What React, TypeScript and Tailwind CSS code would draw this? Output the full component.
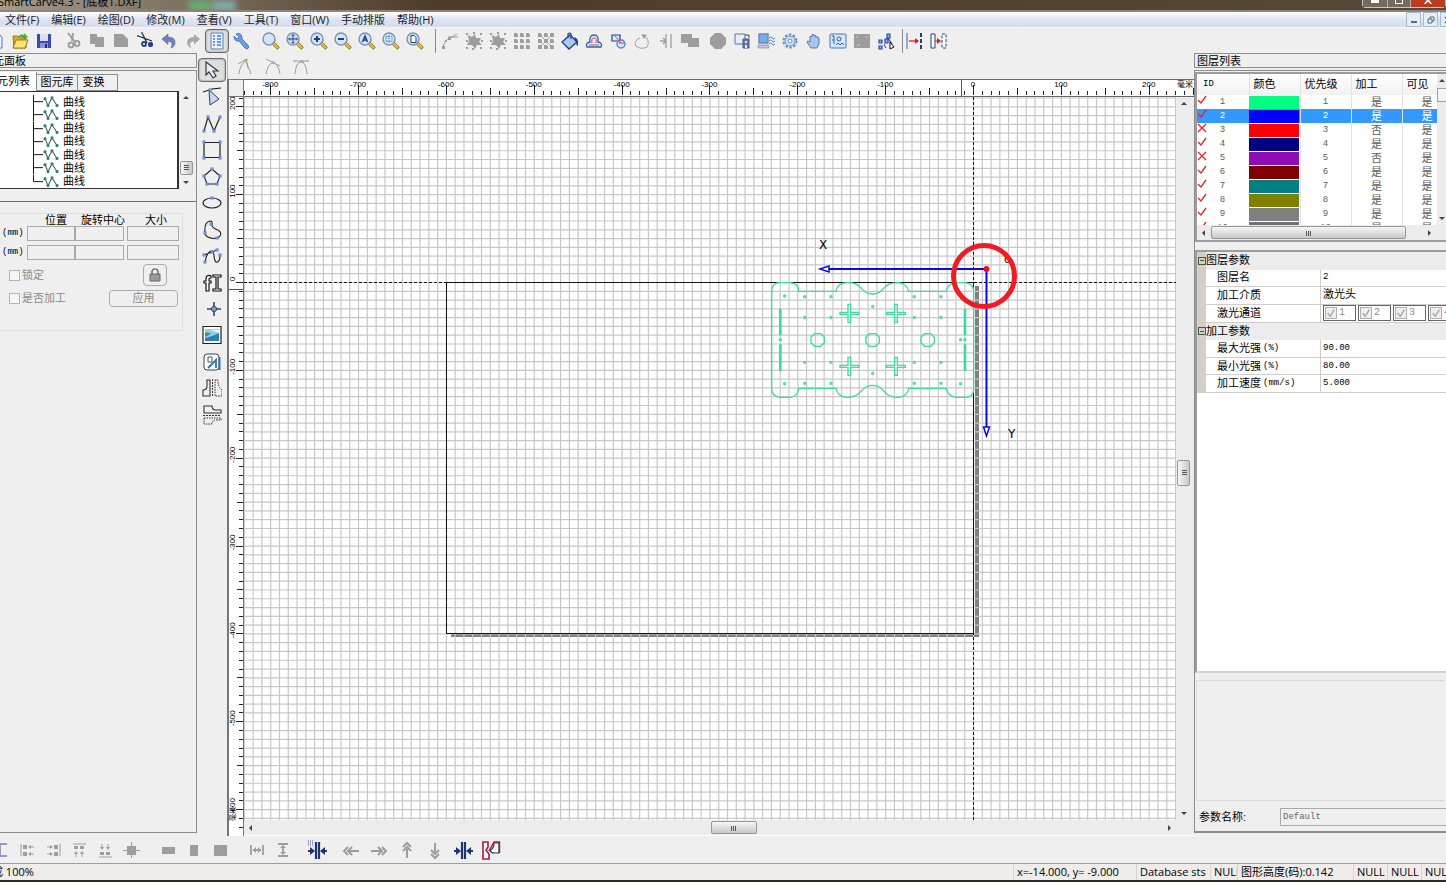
import type { ReactNode } from "react";
import { clsx } from "clsx";

const NAVY = "#1f3f86";
const BLUE = "#4a7fd0";
const GREY = "#9d9d9d";

const UNIT = 0.8785;
const ORIGIN_X = 729;
const ORIGIN_Y = 185;

const MENUS = [
  "文件(F)",
  "编辑(E)",
  "绘图(D)",
  "修改(M)",
  "查看(V)",
  "工具(T)",
  "窗口(W)",
  "手动排版",
  "帮助(H)",
];

type Tool = { label: string; icon: ReactNode; active?: boolean };

function magnifier(inner: ReactNode) {
  return (
    <>
      <path d="M12.500 12.500 17.500 17.500" stroke="#8a6914" strokeWidth="3.600" />
      <path d="M12.500 12.500 17 17" stroke="#edc04c" strokeWidth="2.200" />
      <circle cx="8" cy="8" r="6" fill="#d3e5f7" stroke="#7d93b5" strokeWidth="1.400" />
      {inner}
    </>
  );
}

function cells(color: string, crossed: boolean) {
  return (
    <>
      {[2, 8, 14].map((y) =>
        [2, 8, 14].map((x) => (
          <path key={`${x}-${y}`} d={`M${x} ${y}h3l1 2v2h-4z`} fill={color} />
        )),
      )}
      {crossed && <path d="M2 2 18 18M18 2 2 18" stroke={color} />}
    </>
  );
}

const blob = (
  <>
    <path
      d="M4 4l4 2 3-3 1 4 5 0-2 4 3 3-5 0-2 4-3-4-5 0 2-4z"
      fill={GREY}
    />
    <path
      d="M2 2h2v2H2zM9 1h2v2H9zM16 2h2v2h-2zM2 9h2v2H2zM17 9h2v2h-2zM2 16h2v2H2zM8 17h2v2H8zM16 16h2v2h-2z"
      fill={GREY}
    />
  </>
);

const FILE_TOOLS: Tool[] = [
  {
    label: "New",
    icon: <path d="M6 3h7l3 3v11H6z" fill="#e8f2fd" stroke={BLUE} />,
  },
  {
    label: "Open",
    icon: (
      <>
        <path d="M3 5h5l2 2h6v10H4z" fill="#d9a92c" stroke="#a37a14" />
        <path d="M3 17 6 9h12l-3 8z" fill="#ffe27a" stroke="#a37a14" />
        <path d="M8 6q3-4 6-2V2l4 4-4 3V7q-3-1-6-1z" fill="#4fae34" />
      </>
    ),
  },
  {
    label: "Save",
    icon: (
      <>
        <path d="M3 3h14v14H3z" fill="#3c48b4" />
        <path d="M6 3h8v7H6z" fill="#d9dff5" />
        <path d="M6 12h8v5H6z" fill="#8e96d8" />
        <path d="M11 13h2v4h-2z" fill="#232d86" />
      </>
    ),
  },
];

const EDIT_TOOLS: Tool[] = [
  {
    label: "Cut",
    icon: (
      <>
        <path d="M5 2 12 11M10 2 9 10" stroke={GREY} strokeWidth="2" />
        <circle cx="8" cy="14" r="2.4" stroke={GREY} strokeWidth="2" fill="none" />
        <circle cx="14" cy="12.5" r="2.4" stroke={GREY} strokeWidth="2" fill="none" />
      </>
    ),
  },
  {
    label: "Copy",
    icon: <path d="M3 3h7v3h7v10H8v-3H3z" fill={GREY} />,
  },
  {
    label: "Paste",
    icon: <path d="M3 3h9l5 5v8H3z" fill={GREY} />,
  },
  {
    label: "Split",
    icon: (
      <>
        <path d="M3 5 17 10M7 2 12 12" stroke="#222" strokeWidth="1.2" />
        <path d="M2 4h2v2H2zM6 1h2v2H6z" fill={BLUE} />
        <circle cx="9" cy="13" r="2" stroke={NAVY} strokeWidth="1.8" fill="none" />
        <rect x="13" y="11" width="5" height="5" rx="2" fill={NAVY} />
      </>
    ),
  },
  {
    label: "Undo",
    icon: (
      <path
        d="M3 8 9 3v3q8 0 7 7-1 3-4 4 3-7-3-6.500v3z"
        fill="#6f82b8"
        stroke="#5a6ca3"
        strokeWidth=".6"
      />
    ),
  },
  {
    label: "Redo",
    icon: <path d="M17 8 11 3v3Q4 6 4 12q1 4 4 5-3-7 3-6.500v3z" fill="#a8a8a8" />,
  },
  {
    label: "Panels",
    active: true,
    icon: (
      <>
        <path d="M4 2h12v16H4z" fill="#e7f0fb" stroke="#5c80b4" />
        <path
          d="M6 5h2M10 5h4M6 8h2M10 8h4M6 11h2M10 11h4M6 14h2M10 14h4"
          stroke={BLUE}
          strokeWidth="1.6"
        />
      </>
    ),
  },
  {
    label: "Settings",
    icon: (
      <path
        d="M3 5 6 8 8 6 5 3q5-2 6 3v2l6 6q2 3-1 4-1 0-2-1L8 10Q3 11 3 5z"
        fill="#6e9ce0"
        stroke="#3c6cb8"
        strokeWidth=".8"
      />
    ),
  },
];

const ZOOM_TOOLS: Tool[] = [
  { label: "Zoom", icon: magnifier(null) },
  {
    label: "Pan zoom",
    icon: magnifier(
      <path
        d="M8 4v8M4 8h8M6.500 5 8 3.500 9.500 5M6.500 11 8 12.500 9.500 11M5 6.500 3.500 8 5 9.500M11 6.500 12.500 8 11 9.500"
        stroke={NAVY}
        fill="none"
      />,
    ),
  },
  {
    label: "Zoom in",
    icon: magnifier(<path d="M8 5v6M5 8h6" stroke={NAVY} strokeWidth="2" />),
  },
  {
    label: "Zoom out",
    icon: magnifier(<path d="M5 8h6" stroke={NAVY} strokeWidth="2" />),
  },
  {
    label: "Zoom all",
    icon: magnifier(
      <path d="M5.500 11 8 5 10.500 11M6.500 9h3" stroke={NAVY} strokeWidth="1.500" fill="none" />,
    ),
  },
  {
    label: "Zoom selection",
    icon: magnifier(
      <path
        d="M5 5.500h6v5H5zM8 4v8"
        stroke={BLUE}
        strokeDasharray="1.500 1"
        fill="none"
      />,
    ),
  },
  {
    label: "Zoom page",
    icon: magnifier(<path d="M6 4.500h3l2 2v5H6z" fill="#fff" stroke={NAVY} />),
  },
];

const SHAPE_TOOLS: Tool[] = [
  {
    label: "Edit nodes",
    icon: (
      <>
        <path d="M3 17Q4 9 10 7L17 3M8 6 18 6" stroke={GREY} fill="none" />
        <path d="M2 15h3v3H2zM8 6h3v3H8zM5 9h2v2H5z" fill={GREY} />
      </>
    ),
  },
  { label: "Group", icon: blob },
  { label: "Ungroup", icon: blob },
  { label: "Array", icon: cells(GREY, false) },
  { label: "Clear array", icon: cells(GREY, true) },
  {
    label: "Fill",
    icon: (
      <>
        <path d="M10 4 17 11 9 18 2 11z" fill="#a9c9ea" stroke={NAVY} strokeWidth="1.3" />
        <path d="M8 7V3q2-2 3 0v5" stroke={NAVY} strokeWidth="1.2" fill="none" />
        <path d="M14 6q5 1 4 9-2-1-2-4z" fill={NAVY} />
      </>
    ),
  },
  {
    label: "Offset",
    icon: (
      <>
        <path
          d="M3 16q-2-4 3-5Q5 4 10 4t4 7q5 1 3 5z"
          fill="#dae7f6"
          stroke="#3d5fa6"
          strokeWidth="1.3"
        />
        <path d="M5 14h10M8 12q-1-5 2-5t2 5" stroke="#d0525a" fill="none" />
      </>
    ),
  },
  {
    label: "Weld",
    icon: (
      <>
        <path d="M4 4h8v6H4z" fill="#dfeaf8" stroke={NAVY} strokeWidth="1.2" />
        <circle cx="13" cy="13" r="4" fill="#cfe2f8" stroke={BLUE} strokeWidth="1.3" />
        <path d="M7 5 13 12M11 12h5" stroke="#dc3a44" />
      </>
    ),
  },
  {
    label: "Close curve",
    icon: (
      <>
        <path d="M8 7Q1 10 4 15q5 4 11 1 3-5-1-10" stroke={GREY} fill="none" />
        <path d="M9 3l6 1-3 4z" fill={GREY} />
      </>
    ),
  },
  {
    label: "Align edge",
    icon: (
      <path
        d="M10 3v14M15 3v14M4 10h6M7 7l3 3-3 3"
        stroke={GREY}
        strokeWidth="1.300"
        fill="none"
      />
    ),
  },
];

const UNION_TOOLS: Tool[] = [
  { label: "Union", icon: <path d="M1 3h11v4h7v9H8v-4H1z" fill={GREY} /> },
];

const MACHINE_TOOLS: Tool[] = [
  {
    label: "Stop",
    icon: <path d="M7 2h6l5 5v6l-5 5H7l-5-5V7z" fill={GREY} />,
  },
  {
    label: "Download",
    icon: (
      <>
        <path d="M3 3h10v10H3z" fill="#e8edf5" stroke="#5673a5" />
        <path d="M11 8h6v9h-6z" fill="#6b78a8" stroke="#46568e" />
        <path d="M13 10h2v2h-2zM13 14h2v3h-2z" fill="#e4e9f4" />
        <path d="M13 4h4v3" stroke="#444" fill="none" />
      </>
    ),
  },
  {
    label: "Connect",
    icon: (
      <>
        <path d="M3 3h9v9H3z" fill="#6fb0ec" stroke="#6e86b2" strokeWidth="1.4" />
        <path d="M2 14h10l1 3H2z" fill="#c5c1dd" stroke="#8a86b0" strokeWidth=".7" />
        <path
          d="M13 7q2-2 3 0t3 0M13 10q2-2 3 0t3 0M13 13q2-2 3 0t3 0"
          stroke="#5a83b6"
          fill="none"
        />
      </>
    ),
  },
  {
    label: "Machine options",
    icon: (
      <>
        <circle cx="10" cy="10" r="6.500" stroke="#6790bd" strokeWidth="2" strokeDasharray="2.500 1.600" fill="none" />
        <circle cx="10" cy="10" r="5" fill="#cfe2f5" stroke="#6790bd" />
        <circle cx="10" cy="10" r="2" fill="#fff" stroke="#6790bd" />
      </>
    ),
  },
  {
    label: "Manual",
    icon: (
      <path
        d="M7 17 3 11q0-2 3 0V6q1-2 2 0V4q1-2 2 0v1q2-2 2 1 3-1 3 2v5l-2 4z"
        fill="#a9c4ea"
        stroke="#5878b4"
      />
    ),
  },
  {
    label: "Simulate",
    icon: (
      <>
        <rect x="2" y="3" width="16" height="14" rx="1" fill="#d5e8fa" stroke="#4a74b8" />
        <path d="M4 5h2v8M4 9h2M8 14l2-2 2 2 2-2 2 2" stroke="#335da5" fill="none" />
        <circle cx="11" cy="8" r="2" fill="none" stroke="#335da5" />
      </>
    ),
  },
  {
    label: "Preview",
    icon: (
      <>
        <path d="M2 3h16v14H2z" fill={GREY} />
        <path d="M4 6h2M5 14h3M14 6h2" stroke="#d0d0d0" />
      </>
    ),
  },
  {
    label: "Cut path",
    icon: (
      <>
        <path
          d="M11 3h3v4h-3zM9 8h3v4H9zM3 9h3v3H3zM3 15h3v3H3zM12 7l4 6"
          fill="#8fb7ea"
          stroke="#234c95"
          strokeWidth="1.200"
        />
        <path d="M14 11l4 5-4 2z" fill="#fff" stroke="#111" />
        <path d="M8 13l2 4" stroke="#234c95" />
      </>
    ),
  },
];

const GAP_TOOLS: Tool[] = [
  {
    label: "Move to line",
    icon: (
      <>
        <path d="M2 2v16" stroke="#6b8cc0" strokeWidth="1.4" />
        <path d="M16 2v16" stroke={NAVY} strokeWidth="2" strokeDasharray="4 2" />
        <path d="M4 10h8" stroke="#e02020" strokeWidth="1.3" />
        <path d="M10 7l4 3-4 3z" fill="#e02020" />
      </>
    ),
  },
  {
    label: "Move to edge",
    icon: (
      <>
        <path d="M2 3h4v14H2z" fill="#fff" stroke={NAVY} />
        <path d="M13 3h4v14h-4z" fill="#fff" stroke={NAVY} strokeDasharray="3 1.500" />
        <path d="M6 10h4" stroke="#e02020" />
        <path d="M8 7l4 3-4 3z" fill="#e02020" />
      </>
    ),
  },
];

function squares(points: [number, number][]) {
  return points.map(([x, y]) => (
    <rect
      key={`${x}-${y}`}
      x={x - 1}
      y={y - 1}
      width="2"
      height="2"
      fill="#dbe8fb"
      stroke="#4f7cc6"
    />
  ));
}

const DRAW_TOOLS: Tool[] = [
  {
    label: "Select",
    active: true,
    icon: (
      <path d="M4 2v13l3-3 4 6 3-2-3-5h5z" fill="#e9e9f6" stroke="#3c3c46" strokeWidth="1.2" />
    ),
  },
  {
    label: "Node edit",
    icon: (
      <>
        <path d="M1 5q9-4 18-4" stroke="#111" fill="none" />
        <path d="M7 3l10 9-9 6z" fill="#ccd8f3" stroke="#333c55" />
        {squares([[8, 3]])}
      </>
    ),
  },
  {
    label: "Polyline",
    icon: (
      <>
        <path d="M2 17 6 3l6 14L18 3" stroke="#222" strokeWidth="1.2" fill="none" />
        {squares([[2, 17], [6, 3], [12, 17], [18, 3]])}
      </>
    ),
  },
  {
    label: "Rectangle",
    icon: (
      <>
        <path d="M2 2.500h16v15H2z" stroke="#222" strokeWidth="1.200" fill="none" />
        {squares([[2, 2], [18, 2], [2, 18], [18, 18]])}
      </>
    ),
  },
  {
    label: "Polygon",
    icon: (
      <>
        <path d="M10 2 18 9 15 17H5L2 9z" stroke="#222" strokeWidth="1.1" fill="none" />
        {squares([[10, 2], [18, 9], [15, 17], [5, 17], [2, 9]])}
      </>
    ),
  },
  {
    label: "Ellipse",
    icon: (
      <>
        <ellipse cx="10" cy="10" rx="9" ry="5" stroke="#222" strokeWidth="1.2" fill="none" />
        {squares([[10, 5]])}
      </>
    ),
  },
  {
    label: "Closed curve",
    icon: (
      <>
        <path
          d="M3 13Q2 2 8 1q3 0 2 4 0 3 6 5 5 3 1 7-5 3-11 0-3-1-3-4z"
          stroke="#222"
          strokeWidth="1.1"
          fill="none"
        />
        {squares([[9, 4], [3, 13], [15, 18]])}
      </>
    ),
  },
  {
    label: "Bezier",
    icon: (
      <>
        <path
          d="M3 16Q5 5 10 5c3 0 1 9 4 11q4 1 4-7M2 9 15 4"
          stroke="#222"
          strokeWidth="1.1"
          fill="none"
        />
        {squares([[2, 9], [3, 16], [10, 6], [15, 4], [18, 9]])}
      </>
    ),
  },
  {
    label: "Text",
    icon: (
      <>
        <path
          d="M9 3Q4 1 4 6v2H2v2h2v8h3v-8h2V8H7V6q0-1 2-1z"
          fill="#fff"
          stroke="#111"
          strokeWidth="1.200"
        />
        <path d="M11 2h8v2h-3v12h3v2h-8v-2h3V4h-3z" fill="#fff" stroke="#111" strokeWidth="1.200" />
      </>
    ),
  },
  {
    label: "Point",
    icon: (
      <>
        <path d="M12 3v14M5 10h14" stroke="#33465c" strokeWidth="1.6" />
        <circle cx="12" cy="10" r="2.600" fill="#7fa0bd" stroke="#33465c" />
      </>
    ),
  },
  {
    label: "Image",
    icon: (
      <>
        <path d="M1 1.500h18v17H1z" fill="#fff" stroke="#222" strokeWidth="1.200" />
        <path d="M3 4h14v12H3z" fill="#8fd0f1" />
        <path d="M3 13q6-1 14-5v8H3z" fill="#2b7fb6" />
        <path d="M3 8q3-2 6 1l-6 3z" fill="#4d8f70" />
        <path d="M9 5h8v3z" fill="#f2fbff" />
      </>
    ),
  },
  {
    label: "Copy shape",
    icon: (
      <>
        <rect x="2" y="2" width="15" height="16" rx="3" fill="#fafafa" stroke="#444" />
        <path d="M6 5h4v5H6z" fill="none" stroke="#555" />
        <path d="M6 16l8-8v8" stroke="#3674b4" strokeWidth="1.800" fill="none" />
        <path d="M17.500 5v13" stroke="#3674b4" strokeWidth="2" />
      </>
    ),
  },
  {
    label: "Mirror horizontally",
    icon: (
      <>
        <path d="M5 2h3v16H1v-6q4 0 4-4z" fill="none" stroke="#333" strokeWidth="1.1" />
        <path d="M10.500 1v18" stroke="#333" strokeDasharray="2 1" />
        <path d="M13 2h3q0 6 2 8l2 2v6h-7z" fill="none" stroke="#333" strokeDasharray="1.500 1" />
      </>
    ),
  },
  {
    label: "Mirror vertically",
    icon: (
      <>
        <path d="M2 1h8q0 4 4 4h5v3H2z" fill="none" stroke="#333" strokeWidth="1.1" />
        <path d="M1 10.500h18" stroke="#333" strokeDasharray="2 1" />
        <path d="M2 13h17v2h-6q-3 1-3 4H2z" fill="none" stroke="#333" strokeDasharray="1.500 1" />
      </>
    ),
  },
];

const NODE_TOOLS: Tool[] = [
  {
    label: "Cusp node",
    icon: <path d="M4 18Q5 8 11 5l5 13M3 8l9-5M11 3l2 9M9 4h4" stroke={GREY} fill="none" />,
  },
  {
    label: "Smooth node",
    icon: <path d="M3 18Q5 7 10 7t7 11M3 3l14 7M9 6h3" stroke={GREY} fill="none" />,
  },
  {
    label: "Symmetric node",
    icon: <path d="M4 18Q5 6 10 6t6 12M3 5h14M3 4v2M17 4v2M9 5h3v2" stroke={GREY} fill="none" />,
  },
];

const ALIGN_TOOLS: Tool[] = [
  {
    label: "Frame",
    icon: <path d="M3 4h13M9 4v12M3 16h13" stroke="#7d78b8" strokeWidth="1.4" fill="none" />,
  },
  {
    label: "Align left",
    icon: (
      <>
        <path d="M4 4v12" stroke={GREY} />
        <path d="M6 5h4v4H6zM6 12h4v4H6zM11 7l3-2v4zM11 14l3-2v4z" fill={GREY} />
        <path d="M13 7h4M13 14h4" stroke={GREY} />
      </>
    ),
  },
  {
    label: "Align right",
    icon: (
      <>
        <path d="M17 4v12" stroke={GREY} />
        <path d="M11 5h4v4h-4zM11 12h4v4h-4zM10 7 7 5v4zM10 14l-3-2v4z" fill={GREY} />
        <path d="M4 7h4M4 14h4" stroke={GREY} />
      </>
    ),
  },
  {
    label: "Align top",
    icon: (
      <>
        <path d="M4 4h13" stroke={GREY} />
        <path d="M5 6h4v3H5zM11 6h4v3h-4zM7 11l-2 3h4zM13 11l-2 3h4z" fill={GREY} />
        <path d="M7 13v4M13 13v4" stroke={GREY} />
      </>
    ),
  },
  {
    label: "Align bottom",
    icon: (
      <>
        <path d="M4 17h13" stroke={GREY} />
        <path d="M5 12h4v3H5zM11 12h4v3h-4zM7 10 5 7h4zM13 10l-2-3h4z" fill={GREY} />
        <path d="M7 4v4M13 4v4" stroke={GREY} />
      </>
    ),
  },
  {
    label: "Align center",
    icon: (
      <>
        <path d="M6 6h9v9H6z" fill={GREY} />
        <path d="M10.500 2v16M2 10.500h17" stroke={GREY} />
      </>
    ),
  },
];

const SIZE_TOOLS: Tool[] = [
  { label: "Same width", icon: <path d="M3 7h13v7H3z" fill={GREY} /> },
  { label: "Same height", icon: <path d="M5 5h8v11H5z" fill={GREY} /> },
  { label: "Same size", icon: <path d="M3 5h13v11H3z" fill={GREY} /> },
];

const SPACE_TOOLS: Tool[] = [
  {
    label: "Space horizontally",
    icon: (
      <>
        <path d="M4 5v10M16 5v10M6 10h8" stroke={GREY} strokeWidth="1.8" />
        <path d="M6 10l3-3v6zM14 10l-3-3v6z" fill={GREY} />
      </>
    ),
  },
  {
    label: "Space vertically",
    icon: (
      <>
        <path d="M5 4h10M5 16h10M10 6v8" stroke={GREY} strokeWidth="1.8" />
        <path d="M10 5 7 8h6zM10 15l-3-3h6z" fill={GREY} />
      </>
    ),
  },
];

const squeeze = (
  <>
    <path d="M9 2v17M12 2v17" stroke="#1c3570" strokeWidth="2.200" />
    <path d="M1 11h4M20 11h-4" stroke="#1c3570" strokeWidth="2" />
    <path d="M3 7l5 4-5 4zM18 7l-5 4 5 4z" fill="#1c3570" />
  </>
);

const GRID_TOOLS: Tool[] = [
  {
    label: "Snap to grid",
    icon: (
      <>
        {squeeze}
        <path d="M1 1h6M1 3h6M1 5h6" stroke="#3c5c98" strokeDasharray="1 1" />
      </>
    ),
  },
];

const NUDGE_TOOLS: Tool[] = [
  {
    label: "Nudge left",
    icon: <path d="M7 7 3 11l4 4M11 7l-4 4 4 4M8 11h10" stroke={GREY} strokeWidth="2" fill="none" />,
  },
  {
    label: "Nudge right",
    icon: <path d="M13 7l4 4-4 4M9 7l4 4-4 4M12 11H2" stroke={GREY} strokeWidth="2" fill="none" />,
  },
  {
    label: "Nudge up",
    icon: <path d="M6 7l4-4 4 4M6 11l4-4 4 4M10 9v9" stroke={GREY} strokeWidth="2" fill="none" />,
  },
  {
    label: "Nudge down",
    icon: <path d="M6 14l4 4 4-4M6 10l4 4 4-4M10 12V3" stroke={GREY} strokeWidth="2" fill="none" />,
  },
  { label: "Squeeze", icon: squeeze },
  {
    label: "Nest parts",
    icon: (
      <>
        <path d="M2 2h5v5L5 10l3 4v5H2z" fill="#fff" stroke="#b3163c" strokeWidth="1.600" />
        <path d="M18 3v10h-5q-3 0-4-3 4-1 4-7z" fill="#fff" stroke="#1c3570" strokeWidth="1.200" />
        <path d="M8 11 13 2h5.500v11" fill="none" stroke="#b3163c" strokeWidth="1.400" />
      </>
    ),
  },
];

const LAYERS = [
  { id: 1, on: true, color: "#00ff80", cut: "是" },
  { id: 2, on: true, color: "#0000ff", cut: "是" },
  { id: 3, on: false, color: "#ff0000", cut: "否" },
  { id: 4, on: true, color: "#000080", cut: "是" },
  { id: 5, on: false, color: "#900cb4", cut: "否" },
  { id: 6, on: true, color: "#800000", cut: "是" },
  { id: 7, on: true, color: "#008080", cut: "是" },
  { id: 8, on: true, color: "#808000", cut: "是" },
  { id: 9, on: true, color: "#808080", cut: "是" },
  { id: 10, on: true, color: "#707070", cut: "是" },
];

const STATUS = [
  { text: "x=-14.000, y= -9.000", width: "w-[123px]" },
  { text: "Database sts", width: "w-[74px]" },
  { text: "NULL", width: "w-[27px]" },
  { text: "图形高度(码):0.142", width: "w-[116px]" },
  { text: "NULL", width: "w-[34px]" },
  { text: "NULL", width: "w-[34px]" },
  { text: "NULL", width: "w-[25px]" },
];

function ToolButton({ tool, className }: { tool: Tool; className: string }) {
  return (
    <button
      type="button"
      aria-label={tool.label}
      className={clsx(
        "flex shrink-0 items-center justify-center",
        className,
        tool.active &&
          "rounded-sm border border-[#6a6a6a] bg-[#dfdfdf] shadow-[inset_0_0_2px_#777]",
      )}
    >
      <svg viewBox="0 0 20 20" className="size-5 shrink-0" fill="none">
        {tool.icon}
      </svg>
    </button>
  );
}

function ToolGroup({
  tools,
  className,
  size = "h-6 w-6",
}: {
  tools: Tool[];
  className?: string;
  size?: string;
}) {
  return (
    <div className={clsx("flex shrink-0", className)}>
      {tools.map((tool) => (
        <ToolButton key={tool.label} tool={tool} className={size} />
      ))}
    </div>
  );
}

function Arrow({ dir }: { dir: "up" | "down" | "left" | "right" }) {
  const paths = {
    up: "M1 5 4 2 7 5z",
    down: "M1 3 4 6 7 3z",
    left: "M5 1 2 4 5 7z",
    right: "M3 1 6 4 3 7z",
  };
  return (
    <button type="button" aria-label={dir} className="flex size-[14px] shrink-0 items-center justify-center">
      <svg viewBox="0 0 8 8" className="size-2" fill="#444">
        <path d={paths[dir]} />
      </svg>
    </button>
  );
}

function Thumb({ className, vertical }: { className: string; vertical?: boolean }) {
  return (
    <div
      className={clsx(
        "flex shrink-0 items-center justify-center rounded-[2px] border border-[#969696]",
        vertical
          ? "bg-linear-to-r from-[#f6f6f6] to-[#c9c9c9]"
          : "bg-linear-to-b from-[#f6f6f6] to-[#c9c9c9]",
        className,
      )}
    >
      <svg viewBox="0 0 8 8" className="size-2" stroke="#555">
        <path d={vertical ? "M2 1.500h5M2 3.500h5M2 5.500h5" : "M1.500 2v5M3.500 2v5M5.500 2v5"} />
      </svg>
    </div>
  );
}

function TitleBar() {
  return (
    <header className="flex h-3 shrink-0 justify-between overflow-hidden border-b-2 border-[#8d8579] bg-linear-to-r from-[#a39a8b] via-[#4d3b2b] via-30% to-[#57483a]">
      <div className="flex">
        <h1 className="-ml-0.5 -mt-[7px] w-[190px] whitespace-nowrap font-['Open_Sans','Noto_Sans_CJK_SC',sans-serif] text-[11px] leading-[18px] text-black">
          SmartCarve4.3 - [底板1.DXF]
        </h1>
        <div className="h-3 w-6 bg-[#69ab72] blur-[3px]" />
        <div className="h-3 w-6 bg-[#83a9a5] blur-[3px]" />
      </div>
      <div className="flex h-2 rounded-b border-x border-b border-[#c9c4be] text-white">
        <button type="button" aria-label="Minimize" className="flex w-6 items-start justify-center bg-[#76695d]">
          <span className="h-[3px] w-2 bg-white" />
        </button>
        <button type="button" aria-label="Restore" className="flex w-6 items-start justify-center border-x border-[#b6afa6] bg-[#76695d]">
          <span className="h-1 w-2 border border-t-0 border-white" />
        </button>
        <button type="button" aria-label="Close" className="flex w-[34px] items-start justify-center bg-[#bd3a22]">
          <svg viewBox="0 0 10 5" className="h-1 w-2" stroke="#fff" strokeWidth="2">
            <path d="M5 0 1 5M5 0 9 5" />
          </svg>
        </button>
      </div>
    </header>
  );
}

function MenuBar() {
  return (
    <nav className="flex h-4 shrink-0 items-center justify-between overflow-hidden border-b border-[#f6f6f6] bg-linear-to-b from-white via-[#dde3f1] via-50% to-[#d6ddee]">
      <div className="flex gap-3 pl-[5px] font-['Open_Sans','Noto_Sans_CJK_SC',sans-serif] text-[11px] leading-4 text-[#1b1b1b]">
        {MENUS.map((menu) => (
          <button key={menu} type="button" className="whitespace-nowrap">
            {menu}
          </button>
        ))}
      </div>
      <div className="flex w-10 gap-0.5 overflow-hidden">
        <button type="button" aria-label="Minimize document" className="flex h-[15px] w-[15px] shrink-0 items-center justify-center border border-[#a9bacb] bg-[#e4edf8]">
          <span className="mt-1 h-0.5 w-1.5 bg-[#5b6b80]" />
        </button>
        <button type="button" aria-label="Restore document" className="flex h-[15px] w-[15px] shrink-0 items-center justify-center border border-[#a9bacb] bg-[#e4edf8]">
          <svg viewBox="0 0 8 8" className="size-2" fill="none" stroke="#5b6b80">
            <path d="M3 3V1h4v4H5M1 3h4v4H1z" />
          </svg>
        </button>
        <button type="button" aria-label="Close document" className="flex h-[15px] w-[15px] shrink-0 items-center justify-center border border-[#a9bacb] bg-[#e4edf8]">
          <svg viewBox="0 0 8 8" className="size-2" stroke="#5b6b80" strokeWidth="1.500">
            <path d="M1 1l6 6M7 1 1 7" />
          </svg>
        </button>
      </div>
    </nav>
  );
}

function MainToolbar() {
  return (
    <div className="flex h-[25px] shrink-0 items-center overflow-hidden">
      <ToolGroup tools={FILE_TOOLS} className="-ml-4" />
      <ToolGroup tools={EDIT_TOOLS} className="ml-[5px]" />
      <ToolGroup tools={ZOOM_TOOLS} className="ml-1.5" />
      <span className="ml-2 h-6 w-px shrink-0 bg-[#8c8c8c]" />
      <ToolGroup tools={SHAPE_TOOLS} className="ml-0.5" />
      <ToolGroup tools={UNION_TOOLS} />
      <ToolGroup tools={MACHINE_TOOLS} className="ml-1" />
      <span className="ml-1 h-6 w-px shrink-0 bg-[#8c8c8c]" />
      <ToolGroup tools={GAP_TOOLS} />
    </div>
  );
}

function ElementTree() {
  return (
    <div className="flex h-[98px] pr-[3px]">
      <ul className="flex flex-1 flex-col border-y border-r-2 border-[#333] bg-white pt-[3px]">
        {Array.from({ length: 7 }, (_, i) => (
          <li key={i} className="flex min-h-0 flex-1 items-center pl-8">
            <svg viewBox="0 0 28 14" className="h-full w-7 shrink-0" fill="none" preserveAspectRatio="none">
              <path d={i === 6 ? "M1.500 0v7H11" : "M1.500 0v14M1.500 7H11"} stroke="#111" />
              <path d="M13 4l3 7 4-8 5 8" stroke="#333" />
              <path
                d="M12 3h2v2h-2zM15 10h2v2h-2zM19 2h2v2h-2zM24 10h2v2h-2z"
                fill="#2c8080"
                stroke="#2c8080"
              />
            </svg>
            <span className="pl-[3px] leading-3">曲线</span>
          </li>
        ))}
      </ul>
      <div className="flex w-[14px] flex-col items-center bg-[#f0f0f0]">
        <Arrow dir="up" />
        <div className="flex-1" />
        <Thumb vertical className="h-[14px] w-[13px]" />
        <Arrow dir="down" />
      </div>
    </div>
  );
}

function TransformForm() {
  const input = "mb-1 h-[15px] min-w-0 border border-[#a9a9a9] bg-[#f0f0f0] px-1 text-[10px]";
  return (
    <form className="mr-[13px] mt-[11px] h-[118px] border border-l-0 border-[#dedede]">
      <div className="grid grid-cols-[27px_48px_49px_52px]">
        <span />
        <span className="pl-[18px] leading-3">位置</span>
        <span className="whitespace-nowrap pl-1.5 leading-3">旋转中心</span>
        <span className="pl-[21px] leading-3">大小</span>
        {["X", "Y"].map((axis) => (
          <div key={axis} className="contents">
            <span className="pl-0.5 font-['Liberation_Mono',monospace] text-[9px] leading-[15px]">(mm)</span>
            <input aria-label={`${axis} 位置`} className={input} />
            <input aria-label={`${axis} 旋转中心`} className={input} />
            <input aria-label={`${axis} 大小`} className={clsx(input, "ml-[3px] -mr-[3px]")} />
          </div>
        ))}
      </div>
      <div className="flex items-center justify-between pl-[9px] pr-[15px] text-[#8a8a8a]">
        <label className="flex items-center gap-0.5">
          <input type="checkbox" className="size-[11px] appearance-none border border-[#b5b5b5] bg-[#f6f6f6]" />
          锁定
        </label>
        <button type="button" aria-label="Lock" className="flex h-[22px] w-6 items-center justify-center rounded-sm border border-[#ababab]">
          <svg viewBox="0 0 12 14" className="h-[14px] w-3" fill="none">
            <path d="M3 7V4q0-3 3-3t3 3v3" stroke="#777" strokeWidth="1.6" />
            <path d="M1 6h10v7H1z" fill="#999" stroke="#666" />
          </svg>
        </button>
      </div>
      <div className="mt-1 flex items-center justify-between pl-[9px] pr-1 text-[#8a8a8a]">
        <label className="flex items-center gap-0.5">
          <input type="checkbox" className="size-[11px] appearance-none border border-[#b5b5b5] bg-[#f6f6f6]" />
          是否加工
        </label>
        <button type="button" className="h-[17px] w-[69px] rounded-sm border border-[#ababab] leading-none">
          应用
        </button>
      </div>
    </form>
  );
}

function ElementPanel() {
  return (
    <aside className="flex w-[197px] shrink-0 flex-col overflow-hidden pb-[3px]">
      <div className="h-[15px] border border-l-0 border-[#8c8c8c]">
        <h2 className="-ml-[18px] leading-[15px]">图元面板</h2>
      </div>
      <div className="mt-0.5 flex flex-1 flex-col border border-l-0 border-[#8c8c8c]">
        <div role="tablist" className="mt-px flex h-[19px] items-end">
          <button role="tab" type="button" aria-selected className="-ml-[14px] h-[19px] whitespace-nowrap border-r border-[#8c8c8c] bg-white pr-1.5 leading-none">
            图元列表
          </button>
          <button role="tab" type="button" className="h-[17px] w-[41px] whitespace-nowrap border border-l-0 border-[#8c8c8c] leading-none">
            图元库
          </button>
          <button role="tab" type="button" className="h-[17px] w-10 border border-l-0 border-[#8c8c8c] pr-2 leading-none">
            变换
          </button>
        </div>
        <ElementTree />
        <div className="mt-3 h-px shrink-0 bg-[#6e6e6e]" />
        <TransformForm />
      </div>
    </aside>
  );
}

function TopRuler() {
  const ticks = Array.from({ length: 110 }, (_, i) => i - 83);
  return (
    <svg className="h-[18px] w-full bg-white" shapeRendering="crispEdges">
      {ticks.map((n) => {
        const x = Math.round(ORIGIN_X + n * 10 * UNIT) + 0.5;
        const top = n % 10 === 0 ? 6 : n % 5 === 0 ? 9 : 12;
        return <path key={n} d={`M${x} ${top}V16`} stroke="#222" />;
      })}
      {ticks
        .filter((n) => n % 10 === 0)
        .map((n) => (
          <text
            key={n}
            x={ORIGIN_X + n * 10 * UNIT}
            y="8"
            textAnchor="middle"
            className="font-['Liberation_Sans',sans-serif] text-[8px]"
          >
            {n * 10}
          </text>
        ))}
      <text x="933" y="8" className="font-['Noto_Sans_CJK_SC',sans-serif] text-[8px]">
        毫米
      </text>
      <path d="M717.500 1V17" stroke="#d02030" />
      <path d="M0 .5H2000M0 17.500H2000" stroke="#666" />
    </svg>
  );
}

function LeftRuler() {
  const ticks = Array.from({ length: 84 }, (_, i) => i - 21);
  return (
    <svg className="h-full w-[17px] shrink-0 border-l-2 border-[#777] bg-white" shapeRendering="crispEdges">
      {ticks.map((n) => {
        const y = Math.round(ORIGIN_Y + n * 10 * UNIT) + 0.5;
        const left = n % 10 === 0 ? 7 : n % 5 === 0 ? 8 : 10;
        return <path key={n} d={`M${left} ${y}H14`} stroke="#222" />;
      })}
      {ticks
        .filter((n) => n % 10 === 0)
        .map((n) => {
          const y = ORIGIN_Y + n * 10 * UNIT - 3;
          return (
            <text
              key={n}
              x="6"
              y={y}
              textAnchor="middle"
              transform={`rotate(-90 6 ${y})`}
              className="font-['Liberation_Sans',sans-serif] text-[8px]"
            >
              {-n * 10}
            </text>
          );
        })}
      <text
        x="6"
        y="724"
        transform="rotate(-90 6 724)"
        className="font-['Noto_Sans_CJK_SC',sans-serif] text-[7px]"
      >
        毫米
      </text>
      <path d="M0 192.500H14" stroke="#c02040" />
      <path d="M14.500 0V2000" stroke="#777" />
    </svg>
  );
}

// Plate outline and holes are drawn at three times their on-canvas size.
const PLATE =
  "M35 185Q35 158 60 158H90Q116 160 116 184H228Q232 158 262 158C285 158 294 163 305 176Q318 192 338 192Q358 192 370 176C380 164 390 158 415 158Q440 160 446 184H559Q562 160 590 158H615Q638 160 641 180V480Q640 502 615 502H590Q564 500 559 475H446Q442 500 415 502C388 502 380 492 370 482Q358 466 338 466Q318 466 305 482C295 495 285 502 262 502Q232 500 228 475H116Q114 500 90 502H60Q36 500 35 478Z";

const HOLES = [
  [74, 198], [134, 200], [213, 200], [463, 200], [543, 200],
  [134, 262], [213, 262], [463, 262], [543, 262], [338, 229],
  [61, 329], [602, 329], [615, 329], [338, 430],
  [134, 397], [213, 397], [463, 397], [543, 397],
  [74, 461], [134, 460], [213, 460], [463, 460], [543, 460], [602, 461],
];

const CROSSES = [[268, 250], [408, 250], [268, 409], [408, 409]];

function Plate() {
  return (
    <g transform="translate(516 133) scale(.3333)" stroke="#3ddc9a" strokeWidth="3" fill="none">
      <path d={PLATE} strokeWidth="4" />
      {HOLES.map(([x, y]) => (
        <circle key={`${x}-${y}`} cx={x} cy={y} r="3" strokeWidth="4" />
      ))}
      {CROSSES.map(([x, y]) => (
        <path
          key={`${x}-${y}`}
          d={`M${x - 4} ${y - 27}h8v24h24v6h-24v24h-8v-24h-24v-6h24z`}
          strokeWidth="4"
        />
      ))}
      {[173, 338, 503].map((x) => (
        <path
          key={x}
          d={`M${x - 9} 311h18l11 10v17l-11 11h-18l-11-11v-17z`}
          strokeWidth="4"
        />
      ))}
      <path d="M61 236V316M61 343V423M615 236V316M615 343V423" strokeWidth="8" />
    </g>
  );
}

function Workspace() {
  const columns = Array.from({ length: 160 }, (_, i) => i - 83);
  const rows = Array.from({ length: 90 }, (_, i) => i - 21);
  return (
    <svg className="h-full min-w-0 flex-1 bg-white">
      <path d="M731 189h4v350h-4zM207 536h528v4H207z" fill="#808080" />
      <g stroke="#c8c8c8" strokeWidth="1.200">
        {columns.map((n) => (
          <path key={n} d={`M${ORIGIN_X + 0.5 + n * 10 * UNIT} 0V2000`} />
        ))}
        {rows.map((n) => (
          <path key={n} d={`M0 ${ORIGIN_Y + 0.5 + n * 10 * UNIT}H2000`} />
        ))}
      </g>
      <path d="M202.500 185.500H729.500V536.500H202.500z" stroke="#111" fill="none" />
      <path d="M0 185.500H2000M729.500 0V2000" stroke="#111" strokeDasharray="3 2" />
      <Plate />
      <g stroke="#0a0ad8" strokeWidth="1.500">
        <path d="M742.500 172H584M742.500 172V330" strokeWidth="2" />
        <path d="M576 172l9-3v6zM742.500 339l-3-9h6z" fill="#fff" />
      </g>
      <g className="font-['DejaVu_Sans',sans-serif] text-[12px]">
        <text x="575" y="152">X</text>
        <text x="764" y="341">Y</text>
        <text x="760" y="166" className="text-[10px]">0</text>
      </g>
      <circle cx="742.500" cy="172" r="3" fill="#e8101c" />
      <circle cx="740" cy="179" r="30.500" stroke="#ee1c25" strokeWidth="5" fill="none" />
    </svg>
  );
}

function DrawingArea() {
  return (
    <main className="flex min-w-0 flex-1 flex-col">
      <div className="flex h-[26px] shrink-0 items-center border-l border-[#b5b5b5] pl-[3px]">
        <ToolGroup tools={NODE_TOOLS} size="h-6 w-7" />
      </div>
      <div className="flex h-[18px] shrink-0">
        <div className="w-[17px] shrink-0 border border-l-2 border-[#777]" />
        <div className="min-w-0 flex-1 overflow-hidden">
          <TopRuler />
        </div>
      </div>
      <div className="flex min-h-0 flex-1">
        <LeftRuler />
        <div className="flex min-w-0 flex-1 flex-col">
          <div className="flex min-h-0 flex-1">
            <Workspace />
            <div className="flex w-[18px] flex-col items-start bg-[#ececec] pl-px">
              <Arrow dir="up" />
              <div className="flex-[349]" />
              <Thumb vertical className="h-[26px] w-[13px]" />
              <div className="flex-[320]" />
              <Arrow dir="down" />
            </div>
          </div>
          <div className="flex h-4 shrink-0 items-center border-b border-white bg-[#ececec] pr-[18px]">
            <Arrow dir="left" />
            <div className="flex-[454]" />
            <Thumb className="h-[13px] w-[46px]" />
            <div className="flex-[405]" />
            <Arrow dir="right" />
          </div>
        </div>
      </div>
    </main>
  );
}

function LayerTable() {
  return (
    <div className="mt-px flex h-[170px] flex-col border-2 border-r-0 border-[#9c9c9c] bg-white">
      <div className="flex min-h-0 flex-1">
        <div className="min-w-0 flex-1 overflow-hidden">
          <table className="w-full table-fixed border-collapse">
            <thead>
              <tr className="h-[21px] bg-linear-to-b from-white to-[#f1f1f1] text-left leading-none">
                <th className="w-[52px] pl-1.5 font-['Liberation_Mono',monospace] text-[9px] font-normal">ID</th>
                <th className="w-[51px] border-l border-[#e3e3e3] pl-1 font-normal">颜色</th>
                <th className="w-[51px] whitespace-nowrap border-l border-[#e3e3e3] pl-1 font-normal">优先级</th>
                <th className="w-[51px] border-l border-[#e3e3e3] pl-1 font-normal">加工</th>
                <th className="border-l border-[#e3e3e3] pl-1 font-normal">可见</th>
              </tr>
            </thead>
            <tbody>
              {LAYERS.map((layer) => (
                <tr
                  key={layer.id}
                  className={clsx(
                    "h-[14px] leading-none",
                    layer.id === 2 ? "bg-[#3399ff] text-white" : "text-[#5c5c5c]",
                  )}
                >
                  <td>
                    <div className="flex h-[14px] items-center">
                      <svg viewBox="0 0 10 10" className="mb-1 size-[10px]" fill="none">
                        <path
                          d={layer.on ? "M1 5l3 3 5-7" : "M1 1l8 8M9 1 1 9"}
                          stroke="#e0242c"
                          strokeWidth="1.3"
                        />
                      </svg>
                      <span className="w-[31px] text-center font-['Liberation_Mono',monospace] text-[9px]">{layer.id}</span>
                    </div>
                  </td>
                  <td>
                    <div className="h-[13px] w-[50px]" style={{ backgroundColor: layer.color }} />
                  </td>
                  <td className="border-l border-[#e3e3e3] text-center font-['Liberation_Mono',monospace] text-[9px]">
                    {layer.id}
                  </td>
                  <td className="border-l border-[#e3e3e3]">
                    <div className="h-[14px] text-center leading-[14px]">{layer.cut}</div>
                  </td>
                  <td className="border-l border-[#e3e3e3]">
                    <div className="h-[14px] pl-[19px] leading-[14px]">是</div>
                  </td>
                </tr>
              ))}
            </tbody>
          </table>
        </div>
        <div className="flex w-[9px] shrink-0 flex-col items-center overflow-hidden bg-[#ececec]">
          <Arrow dir="up" />
          <div className="h-[14px] w-[9px] shrink-0 border border-r-0 border-[#a0a0a0] bg-[#f4f4f4]" />
          <div className="flex-1" />
          <Arrow dir="down" />
        </div>
      </div>
      <div className="flex h-[15px] shrink-0 items-center bg-[#ececec] pr-2.5">
        <Arrow dir="left" />
        <Thumb className="h-[13px] w-[195px]" />
        <div className="flex-1" />
        <Arrow dir="right" />
      </div>
    </div>
  );
}

function GroupRow({ title }: { title: string }) {
  return (
    <div className="flex items-center bg-[#ececec] leading-none">
      <button type="button" aria-label={title} className="flex h-full w-[9px] shrink-0 items-center justify-center bg-[#d4d0c8]">
        <span className="flex size-2 items-center justify-center border border-[#3d5a3d]">
          <span className="h-px w-1 bg-[#3d5a3d]" />
        </span>
      </button>
      {title}
    </div>
  );
}

function PropertyRow({
  name,
  unit,
  children,
}: {
  name: string;
  unit?: string;
  children: ReactNode;
}) {
  return (
    <div className="flex items-stretch leading-none">
      <div className="w-[9px] shrink-0 bg-[#d4d0c8]" />
      <div className="flex w-[115px] shrink-0 items-center gap-0.5 border-b border-r border-[#d0cdc6] pl-[11px]">
        {name}
        {unit && <span className="font-['Liberation_Mono',monospace] text-[9px]">{unit}</span>}
      </div>
      <div className="flex flex-1 items-center overflow-hidden border-b border-[#d0cdc6] pl-0.5 font-['Liberation_Mono','Noto_Sans_CJK_SC',monospace]">
        {children}
      </div>
    </div>
  );
}

function LayerProperties() {
  return (
    <div className="mt-2 h-[423px] shrink-0 border-2 border-r-0 border-[#9c9c9c] border-b-[#d5d5d5] bg-white">
      <div className="grid h-[141px] auto-rows-fr">
        <GroupRow title="图层参数" />
        <PropertyRow name="图层名">
          <span className="text-[9px]">2</span>
        </PropertyRow>
        <PropertyRow name="加工介质">激光头</PropertyRow>
        <PropertyRow name="激光通道">
          <div className="flex gap-0.5">
            {[1, 2, 3, 4].map((channel) => (
              <label key={channel} className="flex h-4 w-[33px] shrink-0 items-center gap-0.5 border border-[#666] pl-px text-[10px] text-[#8c8c8c]">
                <input type="checkbox" defaultChecked disabled className="sr-only" />
                <svg viewBox="0 0 12 12" className="size-3 border border-[#b0b0b0] bg-[#efefef]" fill="none">
                  <path d="M2 6l3 4 5-8" stroke="#a5a5a5" strokeWidth="1.600" />
                </svg>
                {channel}
              </label>
            ))}
          </div>
        </PropertyRow>
        <GroupRow title="加工参数" />
        <PropertyRow name="最大光强" unit="(%)">
          <span className="text-[9px]">90.00</span>
        </PropertyRow>
        <PropertyRow name="最小光强" unit="(%)">
          <span className="text-[9px]">80.00</span>
        </PropertyRow>
        <PropertyRow name="加工速度" unit="(mm/s)">
          <span className="text-[9px]">5.000</span>
        </PropertyRow>
      </div>
    </div>
  );
}

function LayerPanel() {
  return (
    <aside className="flex w-[252px] shrink-0 flex-col overflow-hidden pb-[3px]">
      <h2 className="h-[15px] border border-r-0 border-[#8c8c8c] pl-0.5 leading-[15px]">图层列表</h2>
      <div className="mt-0.5 flex flex-1 flex-col border-b-2 border-l border-t border-[#8c8c8c]">
        <LayerTable />
        <LayerProperties />
        <div className="mx-px mt-[7px] flex-1 border border-r-0 border-[#dcdcdc]" />
        <label className="flex h-6 items-start pl-1 pt-px mt-1.5">
          <span className="w-[81px] leading-[18px]">参数名称:</span>
          <input
            defaultValue="Default"
            className="h-[18px] min-w-0 flex-1 border border-r-0 border-[#a9a9a9] bg-[#f0f0f0] px-0.5 font-['Liberation_Mono',monospace] text-[9px] text-[#666]"
          />
        </label>
      </div>
    </aside>
  );
}

export default function App() {
  return (
    <div className="flex h-screen flex-col overflow-hidden bg-[#efefef] font-['Liberation_Sans','Noto_Sans_CJK_SC',sans-serif] text-[11px] text-black">
      <TitleBar />
      <MenuBar />
      <MainToolbar />
      <div className="flex min-h-0 flex-1">
        <ElementPanel />
        <div className="w-[30px] shrink-0 px-px pt-[5px]">
          <div className="flex h-[370px] flex-col">
            {DRAW_TOOLS.map((tool) => (
              <ToolButton
                key={tool.label}
                tool={tool}
                className={tool.active ? "mb-0.5 h-6 w-7" : "w-7 flex-1"}
              />
            ))}
          </div>
        </div>
        <DrawingArea />
        <LayerPanel />
      </div>
      <div className="flex h-[27px] shrink-0 items-center overflow-hidden">
        <ToolGroup tools={ALIGN_TOOLS} size="h-6 w-[26px]" className="-ml-3" />
        <ToolGroup tools={SIZE_TOOLS} size="h-6 w-[26px]" className="ml-3" />
        <ToolGroup tools={SPACE_TOOLS} size="h-6 w-[26px]" className="ml-2.5" />
        <ToolGroup tools={GRID_TOOLS} size="h-6 w-[26px]" className="ml-2" />
        <ToolGroup tools={NUDGE_TOOLS} size="h-6 w-[26px]" className="ml-2 gap-0.5" />
      </div>
      <footer className="flex h-[19px] shrink-0 items-center border-b-2 border-t border-b-[#2d2a22] border-t-[#9d9d9d] bg-[#efecea] font-['Open_Sans','Noto_Sans_CJK_SC',sans-serif] leading-4">
        <span className="-ml-2 flex-1 whitespace-nowrap">成 100%</span>
        {STATUS.map((cell, i) => (
          <span
            key={i}
            className={clsx(
              "shrink-0 overflow-hidden whitespace-nowrap border-l border-[#d6d6d6] pl-[3px]",
              cell.width,
            )}
          >
            {cell.text}
          </span>
        ))}
      </footer>
      <div className="h-1 shrink-0 bg-white" />
    </div>
  );
}
